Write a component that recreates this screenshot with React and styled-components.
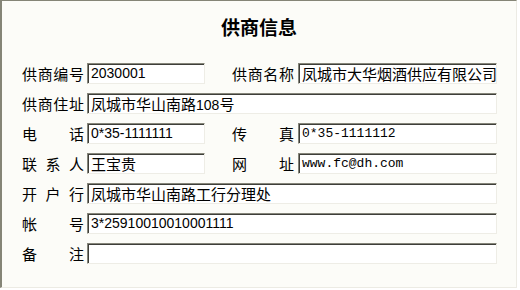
import React from 'react';
import styled, { createGlobalStyle } from 'styled-components';

const Global = createGlobalStyle`
  html, body {
    margin: 0;
    padding: 0;
    background: #ffffff;
  }
`;

const Frame = styled.div`
  box-sizing: border-box;
  width: 517px;
  height: 288px;
  background: #fcfcf8;
  border-top: 1px solid #858577;
  border-left: 2px solid #858577;
  border-right: 1px solid #ecebe4;
  border-bottom: 1px solid #ecebe4;
  padding: 14px 0 0 20px;
  font-family: "Noto Sans CJK SC", "Liberation Sans", sans-serif;
  color: #000;
`;

const Title = styled.h1`
  margin: 0 0 24px 0;
  padding-right: 20px;
  height: 24px;
  line-height: 24px;
  text-align: center;
  font-size: 19px;
  font-weight: bold;
`;

const Form = styled.div`
  display: flex;
  flex-direction: column;
  gap: 9px;
`;

const Row = styled.div`
  display: flex;
  align-items: center;
  height: 21px;
`;

const Label = styled.label`
  display: flex;
  justify-content: space-between;
  width: 62px;
  flex: none;
  margin: 0 3px 0 ${({ right }) => (right ? '27px' : '0')};
  font-size: 15px;
  line-height: 21px;
  white-space: nowrap;
  ${({ right }) => right && 'margin-right: 4px;'}
`;

const Field = styled.div`
  box-sizing: border-box;
  flex: none;
  width: ${({ wide }) => (wide ? '410px' : '118px')};
  ${({ right }) => right && 'width: 199px;'}
  height: 21px;
  background: #ffffff;
  border-top: 1px solid #86867a;
  border-left: 1px solid #86867a;
  border-right: 1px solid #eeede6;
  border-bottom: 1px solid #eeede6;
  box-shadow: inset 1px 1px 0 #3f3f3a;
  padding: 0 0 0 3px;
  font-family: ${({ mono }) =>
    mono ? '"Liberation Mono", monospace' : '"Liberation Sans", "Noto Sans CJK SC", sans-serif'};
  font-size: ${({ mono }) => (mono ? '13px' : '14px')};
  line-height: 19px;
  white-space: nowrap;
  overflow: hidden;
`;

const Cjk = styled.span`
  font-family: "Noto Sans CJK SC", sans-serif;
  font-size: 15px;
`;

const Caption = ({ text, right }) => (
  <Label right={right}>
    {text.split('').map((c, i) => (
      <span key={i}>{c}</span>
    ))}
  </Label>
);

export default function App() {
  return (
    <>
      <Global />
      <Frame>
        <Title>供商信息</Title>
        <Form>
          <Row>
            <Caption text="供商编号" />
            <Field>2030001</Field>
            <Caption text="供商名称" right />
            <Field right><Cjk>凤城市大华烟酒供应有限公司</Cjk></Field>
          </Row>
          <Row>
            <Caption text="供商住址" />
            <Field wide><Cjk>凤城市华山南路</Cjk>108<Cjk>号</Cjk></Field>
          </Row>
          <Row>
            <Caption text="电话" />
            <Field>0*35-1111111</Field>
            <Caption text="传真" right />
            <Field right mono>0*35-1111112</Field>
          </Row>
          <Row>
            <Caption text="联系人" />
            <Field><Cjk>王宝贵</Cjk></Field>
            <Caption text="网址" right />
            <Field right mono>www.fc@dh.com</Field>
          </Row>
          <Row>
            <Caption text="开户行" />
            <Field wide><Cjk>凤城市华山南路工行分理处</Cjk></Field>
          </Row>
          <Row>
            <Caption text="帐号" />
            <Field wide>3*25910010010001111</Field>
          </Row>
          <Row>
            <Caption text="备注" />
            <Field wide></Field>
          </Row>
        </Form>
      </Frame>
    </>
  );
}
